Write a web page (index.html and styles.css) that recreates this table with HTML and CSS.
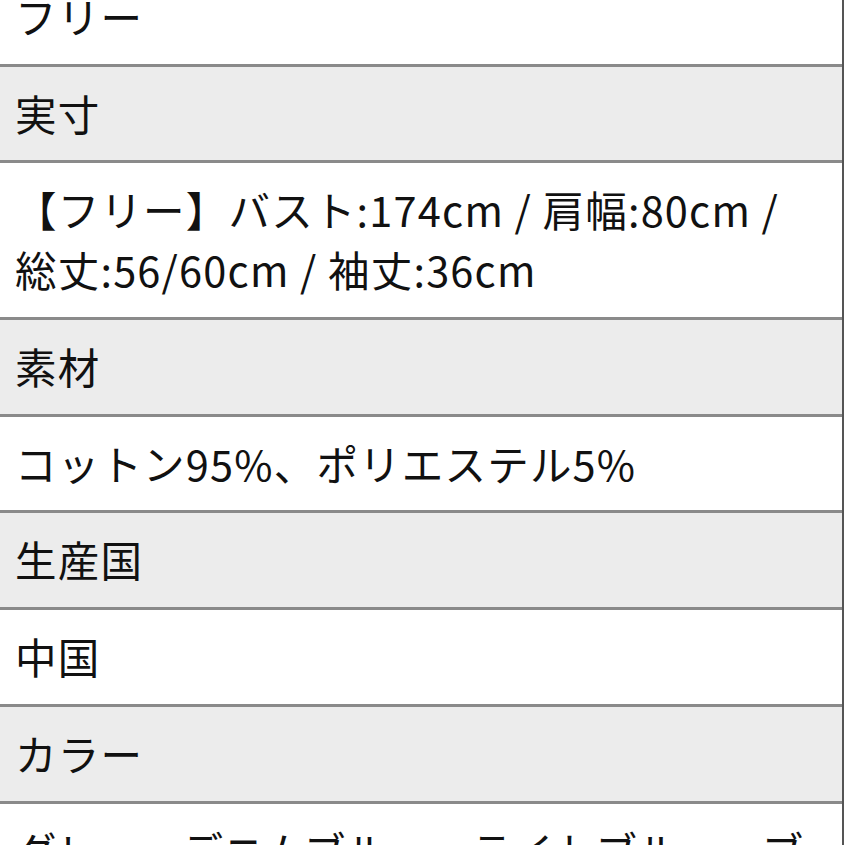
FILE: index.html
```html
<!DOCTYPE html>
<html lang="ja">
<head>
<meta charset="utf-8">
<link rel="stylesheet" href="styles.css">
</head>
<body>
<div class="spec">
  <div class="row val">フリー</div>
  <div class="row head">実寸</div>
  <div class="row val">【フリー】バスト:174cm / 肩幅:80cm / 総丈:56/60cm / 袖丈:36cm</div>
  <div class="row head">素材</div>
  <div class="row val">コットン95%、ポリエステル5%</div>
  <div class="row head">生産国</div>
  <div class="row val">中国</div>
  <div class="row head">カラー</div>
  <div class="row val wide">グレー、デニムブルー、ライトブルー、ブラック</div>
</div>
</body>
</html>
```
FILE: styles.css
```css
html, body {
  margin: 0;
  padding: 0;
  background: #fff;
  overflow: hidden;
}
.spec {
  margin-top: -30px;
  margin-right: 1px;
  border-right: 2px solid #555;
  font-family: "Noto Sans CJK JP", "Noto Sans", sans-serif;
  font-size: 41.5px;
  letter-spacing: 1.2px;
  color: #111;
}
.row {
  padding: 16px 40px 17.7px 15px;
  line-height: 60px;
  border-bottom: 3px solid #8a8a8a;
}
.row.wide {
  padding-right: 0;
  letter-spacing: 0.2px;
}
.head {
  background: #ececec;
}
.val {
  background: #fff;
}
```
